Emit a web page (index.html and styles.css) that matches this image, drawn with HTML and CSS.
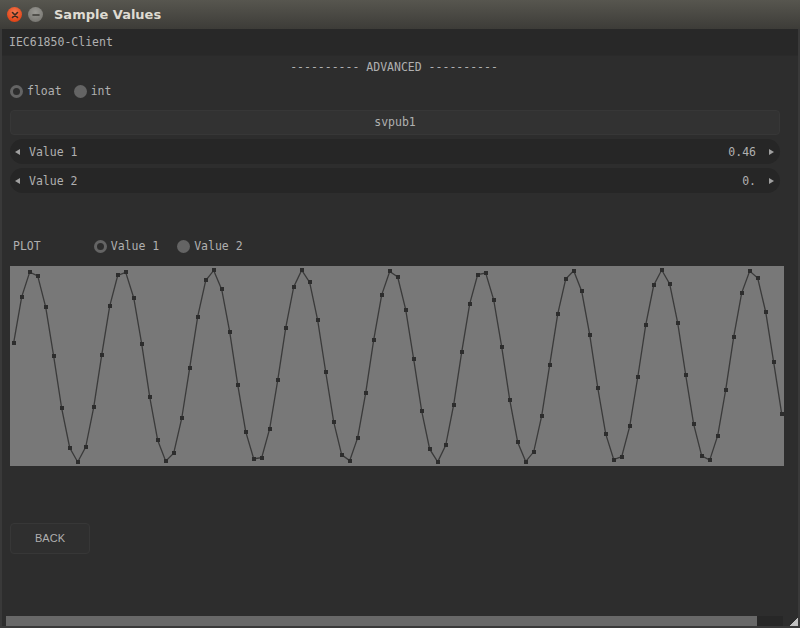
FILE: index.html
```html
<!DOCTYPE html>
<html>
<head>
<meta charset="utf-8">
<link rel="stylesheet" href="styles.css">
</head>
<body>
<div class="titlebar">
  <span class="wbtn close"><svg width="14" height="14" viewBox="0 0 14 14"><path d="M4.5 4.5 L9.5 9.5 M9.5 4.5 L4.5 9.5" stroke="#3a2a20" stroke-width="1.6" stroke-linecap="round"/></svg></span>
  <span class="wbtn min"><svg width="14" height="14" viewBox="0 0 14 14"><path d="M4 7 H10" stroke="#3c3b37" stroke-width="1.6" stroke-linecap="round"/></svg></span>
  <span class="title">Sample Values</span>
</div>
<div class="window">
  <div class="header">IEC61850-Client</div>
  <div class="content">
    <div class="adv">---------- ADVANCED ----------</div>
    <div class="radios">
      <label class="radio"><span class="dot on"></span>float</label>
      <label class="radio r2"><span class="dot"></span>int</label>
    </div>
    <div class="button">svpub1</div>
    <div class="prop"><span class="tri left"></span><span class="pname">Value 1</span><span class="pval">0.46</span><span class="tri right"></span></div>
    <div class="prop"><span class="tri left"></span><span class="pname">Value 2</span><span class="pval">0.</span><span class="tri right"></span></div>
    <div class="plotrow">
      <span class="plotlabel">PLOT</span>
      <label class="radio p1"><span class="dot on"></span>Value 1</label>
      <label class="radio p2"><span class="dot"></span>Value 2</label>
    </div>
    <div class="chart"><svg id="chart" width="774" height="200" viewBox="0 0 774 200"></svg></div>
    <div class="back">BACK</div>
  </div>
  <div class="scrollbar">
    <div class="thumb"></div>
    <div class="track"></div>
    <div class="grip"></div>
  </div>
</div>
<script src="script.js"></script>
</body>
</html>
```

FILE: styles.css
```css
* { box-sizing: border-box; }
html, body { margin: 0; padding: 0; }
body {
  width: 800px;
  height: 628px;
  overflow: hidden;
  background: #3c3b37;
  font-family: "DejaVu Sans Mono", "Liberation Mono", monospace;
  font-size: 11.5px;
  color: #b0b0b0;
}
.titlebar {
  height: 29px;
  display: flex;
  align-items: center;
  background: linear-gradient(#57564f, #3d3c38);
  padding-left: 7px;
}
.wbtn {
  width: 15px;
  height: 15px;
  border-radius: 50%;
  display: flex;
  align-items: center;
  justify-content: center;
}
.wbtn svg { display: block; }
.close {
  background: radial-gradient(circle at 50% 35%, #f47a52, #e2471a 70%, #c63d14);
  margin-right: 6px;
}
.min {
  background: radial-gradient(circle at 50% 35%, #9a9994, #7c7b76 70%, #6b6a65);
}
.title {
  margin-left: 11px;
  font-family: "DejaVu Sans", "Liberation Sans", sans-serif;
  font-weight: bold;
  font-size: 13px;
  color: #dfdbd2;
}
.window {
  height: 599px;
  background: #2d2d2d;
  border-left: 2px solid #393939;
  border-right: 2px solid #393939;
  display: flex;
  flex-direction: column;
}
.header {
  height: 27px;
  line-height: 26px;
  background: #282828;
  padding-left: 7px;
  border-bottom: 1px solid #2a2a2a;
}
.content {
  flex: 1;
  padding: 0 8px;
  display: flex;
  flex-direction: column;
}
.adv {
  margin-top: 2px;
  height: 18px;
  line-height: 18px;
  text-align: center;
  padding-right: 12px;
}
.radios {
  margin-top: 5px;
  height: 20px;
  display: flex;
  align-items: center;
}
.radio {
  display: flex;
  align-items: center;
}
.dot {
  width: 13px;
  height: 13px;
  border-radius: 50%;
  background: #646464;
  margin-right: 4px;
}
.dot.on {
  background: #2d2d2d;
  border: 3px solid #646464;
}
.radios .r2 { margin-left: 12px; }
.button {
  margin-top: 9px;
  height: 25px;
  width: 770px;
  border: 1px solid #373737;
  border-radius: 4px;
  background: #323232;
  text-align: center;
  line-height: 23px;
}
.prop {
  margin-top: 4px;
  height: 25px;
  width: 770px;
  border-radius: 13px;
  background: #262626;
  display: flex;
  align-items: center;
  padding: 0 6px 0 5px;
}
.tri {
  width: 0;
  height: 0;
  border-top: 3px solid transparent;
  border-bottom: 3px solid transparent;
}
.tri.left { border-right: 5px solid #a0a0a0; }
.tri.right { border-left: 5px solid #a0a0a0; }
.pname { margin-left: 9px; flex: 1; }
.pval { margin-right: 13px; }
.plotrow {
  margin-top: 43px;
  height: 20px;
  display: flex;
  align-items: center;
  padding-left: 3px;
}
.plotrow .p1 { margin-left: 53px; }
.plotrow .p2 { margin-left: 18px; }
.chart {
  margin-top: 10px;
  width: 774px;
  height: 200px;
  background: #787878;
}
.chart svg { display: block; }
.back {
  margin-top: 57px;
  width: 80px;
  height: 31px;
  border: 1px solid #373737;
  border-radius: 4px;
  background: #2f2f2f;
  text-align: center;
  line-height: 29px;
  font-family: "Liberation Sans", "DejaVu Sans", sans-serif;
  font-size: 11px;
}
.scrollbar {
  height: 12px;
  display: flex;
  align-items: stretch;
  padding-left: 4px;
  border-bottom: 2px solid #393939;
}
.thumb {
  width: 751px;
  background: #686868;
}
.track {
  width: 26px;
  background: #272727;
}
.grip {
  flex: 1;
  background: linear-gradient(135deg, transparent 52%, #c2c2c2 52%);
  margin-left: 6px;
  margin-top: 2px;
}
```

FILE: script.js
```js
(function () {
  var svg = document.getElementById('chart');
  var ns = 'http://www.w3.org/2000/svg';
  var pts = [];
  for (var i = 0; i < 97; i++) {
    var x = 3.7 + i * 8;
    var y = 100 - 96 * Math.sin(0.245 + i * 0.5592);
    pts.push([x, y]);
  }
  var pl = document.createElementNS(ns, 'polyline');
  pl.setAttribute('points', pts.map(function (p) { return p[0].toFixed(1) + ',' + p[1].toFixed(1); }).join(' '));
  pl.setAttribute('fill', 'none');
  pl.setAttribute('stroke', '#3a3a3a');
  pl.setAttribute('stroke-width', '1.3');
  svg.appendChild(pl);
  pts.forEach(function (p) {
    var r = document.createElementNS(ns, 'rect');
    r.setAttribute('x', Math.round(p[0] - 2));
    r.setAttribute('y', Math.round(p[1] - 2));
    r.setAttribute('width', '4');
    r.setAttribute('height', '4');
    r.setAttribute('fill', '#2d2d2d');
    svg.appendChild(r);
  });
})();
```
